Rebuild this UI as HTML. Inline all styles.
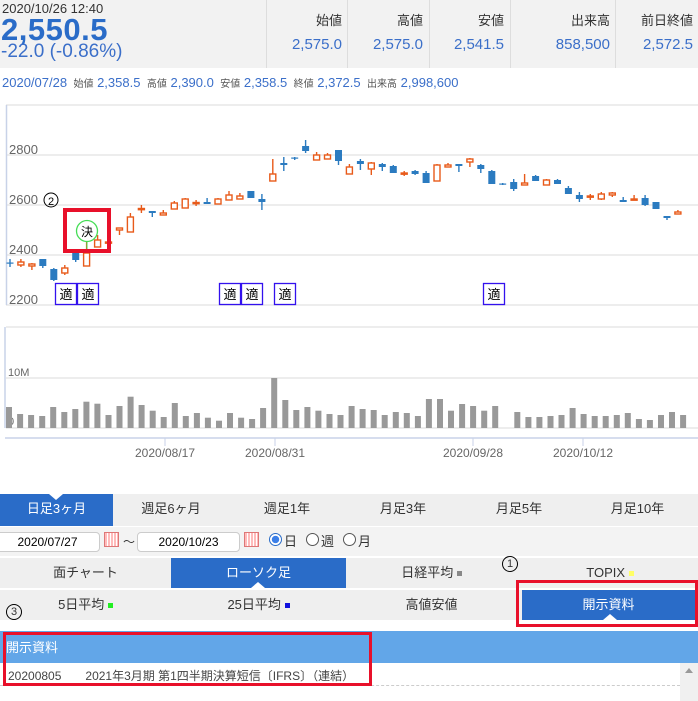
<!DOCTYPE html><html><head><meta charset="utf-8"><style>
*{margin:0;padding:0;box-sizing:border-box}
body{width:698px;height:701px;overflow:hidden;background:#fff;font-family:"Liberation Sans","Noto Sans CJK JP",sans-serif;position:relative;color:#333}
.a{position:absolute;white-space:nowrap}
.hd{position:absolute;left:0;top:0;width:698px;height:68px;background:#f2f2f2}
.sep{position:absolute;top:0;width:1px;height:68px;background:#ddd}
.lb{position:absolute;top:10px;font-size:13px;color:#333;text-align:right}
.vl{position:absolute;top:36px;font-size:15px;color:#3b6fc9;text-align:right}
.tab{position:absolute;font-size:13px;text-align:center;color:#333}
.blue{background:#2a6cc8;color:#fff}
.tri{position:absolute;width:0;height:0;border-left:7px solid transparent;border-right:7px solid transparent}
</style></head><body>
<div class="hd"></div>
<div class="a" style="left:2px;top:1px;font-size:13px;color:#333">2020/10/26 12:40</div>
<div class="a" style="left:1px;top:12px;font-size:31px;font-weight:bold;color:#2a6cc8;letter-spacing:0.5px">2,550.5</div>
<div class="a" style="left:1px;top:41px;font-size:19px;color:#3b6fc9">-22.0 (-0.86%)</div>
<div class="sep" style="left:266px"></div><div class="sep" style="left:347px"></div><div class="sep" style="left:429px"></div><div class="sep" style="left:510px"></div><div class="sep" style="left:615px"></div>
<div class="lb" style="right:356px">始値</div><div class="lb" style="right:275px">高値</div><div class="lb" style="right:194px">安値</div><div class="lb" style="right:88px">出来高</div><div class="lb" style="right:5px">前日終値</div>
<div class="vl" style="right:356px">2,575.0</div><div class="vl" style="right:275px">2,575.0</div><div class="vl" style="right:194px">2,541.5</div><div class="vl" style="right:88px">858,500</div><div class="vl" style="right:5px">2,572.5</div>
<div class="a" style="left:2px;top:75px;font-size:13px;color:#3b6fc9">2020/07/28 <span style="font-size:10px;color:#555">&nbsp;始値</span> 2,358.5 <span style="font-size:10px;color:#555">&nbsp;高値</span> 2,390.0 <span style="font-size:10px;color:#555">&nbsp;安値</span> 2,358.5 <span style="font-size:10px;color:#555">&nbsp;終値</span> 2,372.5 <span style="font-size:10px;color:#555">&nbsp;出来高</span> 2,998,600</div>

<svg class="a" style="left:0;top:0" width="698" height="470">
<g stroke="#e2e2e2" stroke-width="1.3"><line x1="6" y1="105" x2="698" y2="105"/><line x1="6" y1="155" x2="698" y2="155"/><line x1="6" y1="205" x2="698" y2="205"/><line x1="6" y1="255" x2="698" y2="255"/><line x1="6" y1="305" x2="698" y2="305"/>
<line x1="6" y1="327" x2="698" y2="327"/><line x1="6" y1="378" x2="698" y2="378"/><line x1="6" y1="428" x2="698" y2="428"/></g>
<line x1="6.5" y1="105" x2="6.5" y2="305" stroke="#c8d2e8" stroke-width="1.5"/>
<line x1="5" y1="327" x2="5" y2="428" stroke="#c8d2e8" stroke-width="1.5"/>
<line x1="5" y1="438" x2="698" y2="438" stroke="#c8d2e8" stroke-width="1.5"/>
<g stroke="#c8d2e8"><line x1="165" y1="438" x2="165" y2="446"/><line x1="275" y1="438" x2="275" y2="446"/><line x1="473" y1="438" x2="473" y2="446"/><line x1="583" y1="438" x2="583" y2="446"/></g>
<g font-size="13" fill="#666" font-family="Liberation Sans,sans-serif"><text x="9" y="154">2800</text><text x="9" y="204">2600</text><text x="9" y="254">2400</text><text x="9" y="304">2200</text><text x="8" y="376" font-size="11">10M</text><text x="8" y="425" font-size="11">0</text>
<text x="165" y="457" text-anchor="middle" font-size="12">2020/08/17</text><text x="275" y="457" text-anchor="middle" font-size="12">2020/08/31</text><text x="473" y="457" text-anchor="middle" font-size="12">2020/09/28</text><text x="583" y="457" text-anchor="middle" font-size="12">2020/10/12</text></g>
<g id="vol" fill="#999"></g>
<g id="cnd"></g>
<circle cx="87" cy="231" r="10.5" fill="#fff" stroke="#44dd55" stroke-width="1.3"/>
<line x1="87" y1="242" x2="87" y2="253" stroke="#44dd55"/>
<text x="87" y="236" font-size="12" text-anchor="middle" font-family="Noto Sans CJK JP,sans-serif">決</text>
<rect x="65" y="210" width="44" height="41" fill="none" stroke="#e8102a" stroke-width="4"/>
<circle cx="51" cy="200" r="7" fill="none" stroke="#000" stroke-width="1"/><text x="51" y="205" font-size="11" text-anchor="middle">2</text>
<g fill="none" stroke="#3311ee" stroke-width="1.3"><rect x="55.5" y="283.5" width="21" height="21"/><rect x="77.5" y="283.5" width="21" height="21"/><rect x="219.5" y="283.5" width="21" height="21"/><rect x="241.5" y="283.5" width="21" height="21"/><rect x="274.5" y="283.5" width="21" height="21"/><rect x="483.5" y="283.5" width="21" height="21"/></g>
<g font-size="13" text-anchor="middle" font-family="Noto Sans CJK JP,sans-serif"><text x="66" y="299">適</text><text x="88" y="299">適</text><text x="230" y="299">適</text><text x="252" y="299">適</text><text x="285" y="299">適</text><text x="494" y="299">適</text></g>
</svg>

<div class="a" style="left:0;top:494px;width:698px;height:32px;background:#efefef"></div>
<div class="tab blue" style="left:0;top:494px;width:113px;height:32px;line-height:30px">日足3ヶ月</div>
<div class="tri" style="left:49px;top:494px;border-top:6px solid #fff"></div>
<div class="tab" style="left:113px;top:494px;width:116px;line-height:30px">週足6ヶ月</div>
<div class="tab" style="left:229px;top:494px;width:116px;line-height:30px">週足1年</div>
<div class="tab" style="left:345px;top:494px;width:116px;line-height:30px">月足3年</div>
<div class="tab" style="left:461px;top:494px;width:116px;line-height:30px">月足5年</div>
<div class="tab" style="left:577px;top:494px;width:121px;line-height:30px">月足10年</div>
<div class="a" style="left:0;top:527px;width:698px;height:29px;background:#f3f3f3"></div>
<div class="a" style="left:-5px;top:532px;width:105px;height:20px;background:#fff;border:1px solid #ccc;border-radius:4px;font-size:12px;text-align:center;line-height:18px;color:#000">2020/07/27</div>
<div class="a" style="left:104px;top:532px;width:15px;height:15px;border:1px solid #d77;background:repeating-linear-gradient(90deg,#fbb 0 2px,#fff 2px 3px)"></div>
<div class="a" style="left:123px;top:533px;font-size:12px">～</div>
<div class="a" style="left:137px;top:532px;width:103px;height:20px;background:#fff;border:1px solid #ccc;border-radius:4px;font-size:12px;text-align:center;line-height:18px;color:#000">2020/10/23</div>
<div class="a" style="left:244px;top:532px;width:15px;height:15px;border:1px solid #d77;background:repeating-linear-gradient(90deg,#fbb 0 2px,#fff 2px 3px)"></div>
<div class="a" style="left:269px;top:533px;width:13px;height:13px;border:1px solid #2a6cc8;border-radius:50%;background:radial-gradient(#3b7fe8 45%,#fff 50%)"></div>
<div class="a" style="left:284px;top:531px;font-size:13px">日</div>
<div class="a" style="left:306px;top:533px;width:13px;height:13px;border:1px solid #555;border-radius:50%;background:#fff"></div>
<div class="a" style="left:321px;top:531px;font-size:13px">週</div>
<div class="a" style="left:343px;top:533px;width:13px;height:13px;border:1px solid #555;border-radius:50%;background:#fff"></div>
<div class="a" style="left:358px;top:531px;font-size:13px">月</div>

<div class="a" style="left:0;top:558px;width:698px;height:62px;background:#efefef"></div>
<div class="a" style="left:0;top:588px;width:698px;height:2px;background:#fff"></div>
<div class="tab" style="left:0;top:558px;width:171px;line-height:30px">面チャート</div>
<div class="tab blue" style="left:171px;top:558px;width:175px;height:30px;line-height:30px">ローソク足</div>
<div class="tri" style="left:251px;top:582px;border-bottom:6px solid #fff"></div>
<div class="tab" style="left:346px;top:558px;width:171px;line-height:30px">日経平均 <span style="display:inline-block;width:5px;height:5px;background:#888;vertical-align:middle"></span></div>
<div class="tab" style="left:522px;top:558px;width:176px;line-height:30px">TOPIX <span style="display:inline-block;width:5px;height:5px;background:#ff6;vertical-align:middle"></span></div>
<div class="tab" style="left:0;top:590px;width:171px;line-height:30px">5日平均 <span style="display:inline-block;width:5px;height:5px;background:#2e2;vertical-align:middle"></span></div>
<div class="tab" style="left:171px;top:590px;width:175px;line-height:30px">25日平均 <span style="display:inline-block;width:5px;height:5px;background:#11d;vertical-align:middle"></span></div>
<div class="tab" style="left:346px;top:590px;width:171px;line-height:30px">高値安値</div>
<div class="tab blue" style="left:522px;top:590px;width:173px;height:30px;line-height:30px">開示資料</div>
<div class="tri" style="left:603px;top:614px;border-bottom:6px solid #fff"></div>
<div class="a" style="left:516px;top:580px;width:182px;height:47px;border:3px solid #e8102a"></div>
<div class="a" style="left:502px;top:556px;width:16px;height:16px;border:1px solid #000;border-radius:50%;font-size:11px;text-align:center;line-height:14px">1</div>
<div class="a" style="left:6px;top:604px;width:16px;height:16px;border:1px solid #000;border-radius:50%;font-size:11px;text-align:center;line-height:14px">3</div>

<div class="a" style="left:0;top:631px;width:698px;height:32px;background:#62a6e8"></div>
<div class="a" style="left:6px;top:637px;font-size:13px;color:#fff">開示資料</div>
<div class="a" style="left:0;top:685px;width:680px;border-top:1px dashed #ccc"></div>
<div class="a" style="left:680px;top:663px;width:18px;height:38px;background:#f0f0f0"></div>
<div class="a" style="left:685px;top:668px;width:0;height:0;border-left:4px solid transparent;border-right:4px solid transparent;border-bottom:5px solid #999"></div>
<div class="a" style="left:8px;top:667px;font-size:12px;color:#444">20200805　　2021年3月期 第1四半期決算短信〔IFRS〕（連結）</div>
<div class="a" style="left:3px;top:632px;width:369px;height:54px;border:3px solid #e8102a"></div>

<script>
var vt=[262,283,286,289,262,277,268,246,252,286,259,231,256,273,292,250,289,280,294,303,280,294,298,265,175,241,271,262,273,283,286,259,268,271,286,277,280,289,238,238,273,253,259,273,259,null,277,292,292,289,286,265,283,289,289,286,280,298,301,286,277,286];
var s='';vt.forEach(function(t,i){if(t==null)return;var h=(325-t)/3;var x=9+11.05*i;s+='<rect x="'+(x-3).toFixed(1)+'" y="'+(428-h).toFixed(1)+'" width="6" height="'+h.toFixed(1)+'"/>';});
document.getElementById('vol').innerHTML=s;
var c=[[262.5,263.5,259,267,'b'],[262,265,259,267,'o'],[264,266,263,270,'o'],[259,266,259,268,'b'],[269,280,268,281,'b'],[268,273,265,275,'o'],[253,260,253,262,'b'],[253,266,240,266,'o'],[240,247,235,247,'o'],[242,243,242,243,'o'],[228,230,228,235,'o'],[217,232,213,232,'o'],[208.5,209.5,205,213,'o'],[211,213,211,217,'b'],[213,215,210,215,'o'],[203,209,201,209,'o'],[199,208,198,208,'o'],[202.5,203.5,200,206,'o'],[202,204,198,204,'b'],[199,204,198,204,'o'],[195,200,191,200,'o'],[196,199,193,199,'o'],[191,198,191,198,'b'],[199,202,194,210,'b'],[174,181,159,181,'o'],[163,165,157,171,'b'],[157.5,158.5,157,160,'b'],[146,151,140,153,'b'],[155,160,152,160,'o'],[155,159,153,159,'o'],[150,161,150,165,'b'],[167,174,164,174,'o'],[161,164,159,170,'b'],[163,169,162,175,'o'],[164,167,163,171,'b'],[166,173,165,173,'b'],[173,174,171,176,'o'],[171,174,170,175,'b'],[173,183,171,183,'b'],[165,181,164,181,'o'],[165,167,163,167,'o'],[164,166,164,172,'b'],[159,162,158,167,'o'],[165,169,164,173,'b'],[171,184,170,184,'b'],[183.5,184.5,183,185,'b'],[182,189,179,191,'b'],[183,185,174,185,'o'],[176,181,175,181,'b'],[180,185,179,185,'o'],[180,184,179,184,'b'],[188,194,186,194,'b'],[195,199,192,202,'b'],[196,197,194,200,'o'],[194,199,192,200,'o'],[193,195,192,197,'o'],[200,202,197,202,'b'],[199,200,195,200,'o'],[198,205,195,206,'b'],[202,209,202,209,'b'],[216,218,216,220,'b'],[212,214,210,214,'o']];
var s2='';c.forEach(function(d,i){var x=10+10.95*i;var col=d[4]=='b'?'#2b7bc0':'#e85a1a';s2+='<line x1="'+x.toFixed(1)+'" y1="'+d[2]+'" x2="'+x.toFixed(1)+'" y2="'+d[3]+'" stroke="'+col+'" stroke-width="1.4"/>';var h=Math.max(d[1]-d[0],1.2);if(d[4]=='b')s2+='<rect x="'+(x-3.5).toFixed(1)+'" y="'+d[0]+'" width="7" height="'+h+'" fill="'+col+'"/>';else s2+='<rect x="'+(x-3).toFixed(1)+'" y="'+d[0]+'" width="6" height="'+h+'" fill="#fff" stroke="'+col+'" stroke-width="1.4"/>';});
document.getElementById('cnd').innerHTML=s2;
</script>
</body></html>
